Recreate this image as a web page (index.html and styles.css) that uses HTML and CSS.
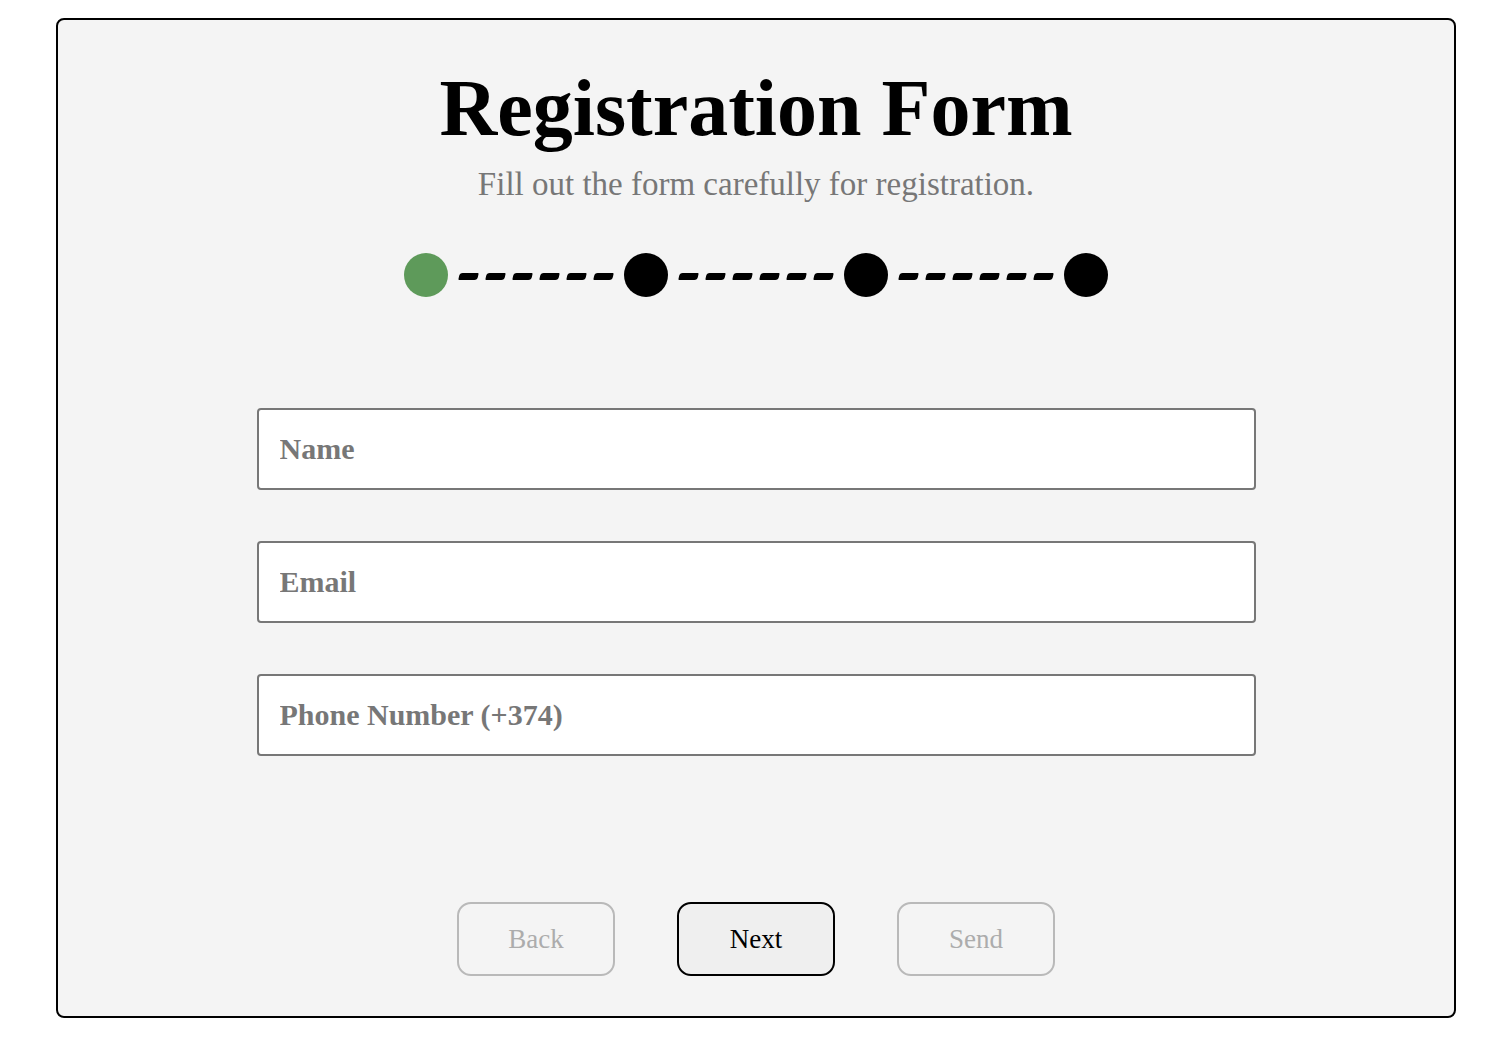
FILE: index.html
```html
<!DOCTYPE html>
<html lang="en">
<head>
<meta charset="utf-8">
<title>Registration Form</title>
<link rel="stylesheet" href="styles.css">
</head>
<body>
<main class="card">
  <h1 class="title">Registration Form</h1>
  <p class="subtitle">Fill out the form carefully for registration.</p>
  <div class="stepper">
    <span class="dot dot-active"></span>
    <span class="line"><i></i><i></i><i></i><i></i><i></i><i></i></span>
    <span class="dot"></span>
    <span class="line"><i></i><i></i><i></i><i></i><i></i><i></i></span>
    <span class="dot"></span>
    <span class="line"><i></i><i></i><i></i><i></i><i></i><i></i></span>
    <span class="dot"></span>
  </div>
  <form class="fields">
    <input class="field" type="text" placeholder="Name">
    <input class="field" type="email" placeholder="Email">
    <input class="field" type="tel" placeholder="Phone Number (+374)">
  </form>
  <div class="actions">
    <button class="btn btn-disabled" type="button">Back</button>
    <button class="btn btn-primary" type="button">Next</button>
    <button class="btn btn-disabled" type="button">Send</button>
  </div>
</main>
</body>
</html>
```

FILE: styles.css
```css
html, body {
  margin: 0;
  padding: 0;
  background: #ffffff;
}

body {
  font-family: "Liberation Serif", "Times New Roman", serif;
}

.card {
  box-sizing: border-box;
  width: 1400px;
  height: 1000px;
  margin: 18px 0 0 56px;
  border: 2px solid #000;
  border-radius: 8px;
  background: #f4f4f4;
  display: flex;
  flex-direction: column;
  align-items: center;
  padding-top: 48px;
}

.title {
  margin: 0;
  font-size: 80px;
  line-height: 80px;
  font-weight: bold;
  color: #000;
}

.subtitle {
  margin: 20px 0 0;
  font-size: 33px;
  line-height: 33px;
  color: #777;
}

.stepper {
  margin-top: 52px;
  display: flex;
  align-items: center;
}

.dot {
  width: 44px;
  height: 44px;
  border-radius: 50%;
  background: #000;
}

.dot-active {
  background: #5e9a5a;
}

.line {
  display: flex;
  gap: 8px;
  margin: 2px 11px 0;
}

.line i {
  display: block;
  width: 19px;
  height: 7px;
  background: #000;
  border-radius: 3px 1px 3px 1px;
  transform: skewX(-12deg);
}

.fields {
  margin-top: 111px;
  display: flex;
  flex-direction: column;
  gap: 51px;
}

.field {
  box-sizing: border-box;
  width: 999px;
  height: 82px;
  border: 2px solid #777;
  border-radius: 4px;
  background: #fff;
  padding: 0 21px;
  font-family: "Liberation Serif", "Times New Roman", serif;
  font-size: 30px;
  font-weight: bold;
  color: #333;
  outline: none;
}

.field::placeholder {
  color: #777;
  opacity: 1;
}

.actions {
  margin-top: 146px;
  display: flex;
  gap: 62px;
}

.btn {
  box-sizing: border-box;
  width: 158px;
  height: 74px;
  border-radius: 14px;
  font-family: "Liberation Serif", "Times New Roman", serif;
  font-size: 27px;
  padding: 0;
  cursor: pointer;
}

.btn-disabled {
  border: 2px solid #b9b9b9;
  background: #f4f4f4;
  color: #acacac;
}

.btn-primary {
  border: 2px solid #000;
  background: #efefef;
  color: #000;
}
```
